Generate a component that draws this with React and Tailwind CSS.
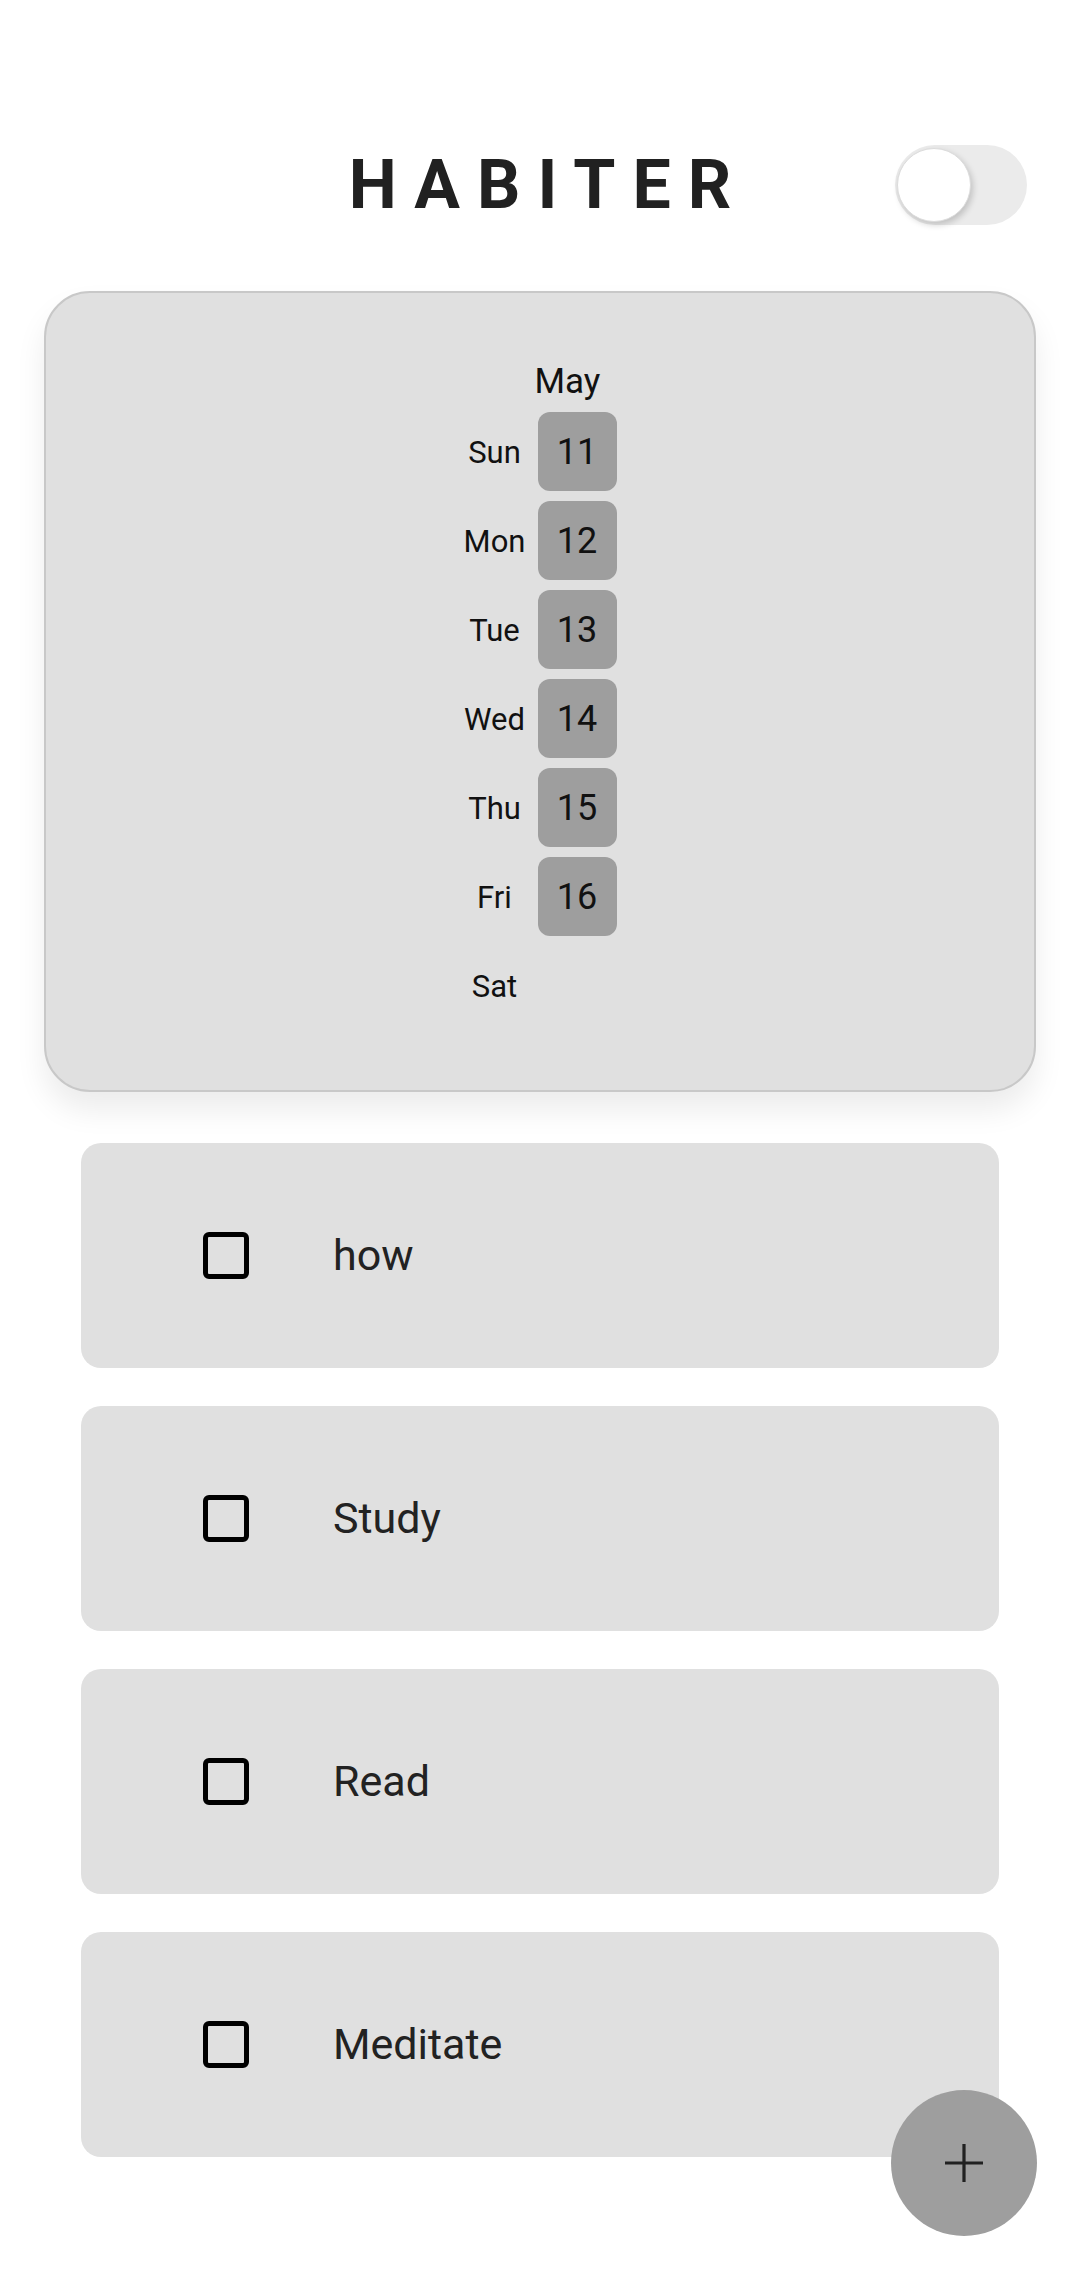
import { useState } from "react";

const days = [
  { label: "Sun", date: 11 },
  { label: "Mon", date: 12 },
  { label: "Tue", date: 13 },
  { label: "Wed", date: 14 },
  { label: "Thu", date: 15 },
  { label: "Fri", date: 16 },
  { label: "Sat", date: null },
];

const initialHabits = ["how", "Study", "Read", "Meditate"];

function Toggle({ on, onChange }) {
  return (
    <button
      onClick={() => onChange(!on)}
      className="relative w-[132px] h-[80px] rounded-full bg-[#ebebeb] flex items-center px-[2px]"
    >
      <span className="w-[74px] h-[74px] rounded-full bg-white border border-[#dcdcdc] shadow-[2px_3px_6px_rgba(0,0,0,0.18)]" />
    </button>
  );
}

function Calendar() {
  return (
    <div className="mx-[44px] mt-[66px] bg-[#e0e0e0] border-2 border-[#c8c8c8] rounded-[46px] shadow-[0_18px_30px_rgba(0,0,0,0.08)] pt-[69px] pb-[65px] flex justify-center">
      <div className="grid grid-cols-[62px_79px] gap-x-[12px] gap-y-[10px] items-center">
        <div />
        <div className="text-[35px] leading-[40px] text-[#111] -ml-[3px]">May</div>
        {days.map((d) => (
          <Row key={d.label} {...d} />
        ))}
      </div>
    </div>
  );
}

function Row({ label, date }) {
  return (
    <>
      <div className="text-[31px] text-center text-[#111] pt-[3px]">{label}</div>
      {date ? (
        <div className="h-[79px] rounded-[12px] bg-[#9e9e9e] flex items-center justify-center text-[36px] text-[#111]">
          {date}
        </div>
      ) : (
        <div className="h-[79px]" />
      )}
    </>
  );
}

function HabitCard({ name }) {
  const [done, setDone] = useState(false);
  return (
    <div className="h-[225px] rounded-[20px] bg-[#e0e0e0] flex items-center pl-[122px]">
      <button
        onClick={() => setDone(!done)}
        className="w-[46px] h-[47px] border-[5px] border-black rounded-[6px] flex items-center justify-center"
      >
        {done && <span className="w-[22px] h-[22px] bg-black" />}
      </button>
      <span className="ml-[84px] text-[43px] text-[#222]">{name}</span>
    </div>
  );
}

export default function App() {
  const [dark, setDark] = useState(false);
  const [habits] = useState(initialHabits);

  return (
    <div className="min-h-[2280px] bg-white font-['Roboto',sans-serif]">
      {/* HEADER */}
      <div className="grid grid-cols-[1fr_auto_1fr] items-center pt-[145px]">
        <div />
        <h1 className="text-[68px] leading-none font-bold tracking-[17px] pl-[17px] text-[#212121]">
          HABITER
        </h1>
        <div className="flex justify-end pr-[53px]">
          <Toggle on={dark} onChange={setDark} />
        </div>
      </div>

      {/* CALENDAR */}
      <Calendar />

      {/* HABITS */}
      <div className="mx-[81px] mt-[51px] flex flex-col gap-[38px]">
        {habits.map((h) => (
          <HabitCard key={h} name={h} />
        ))}
      </div>

      {/* FAB */}
      <button className="fixed right-[43px] bottom-[44px] w-[146px] h-[146px] rounded-full bg-[#9e9e9e] flex items-center justify-center">
        <svg width="40" height="40" viewBox="0 0 40 40">
          <path d="M20 1v38M1 20h38" stroke="#212121" strokeWidth="3.2" />
        </svg>
      </button>
    </div>
  );
}
